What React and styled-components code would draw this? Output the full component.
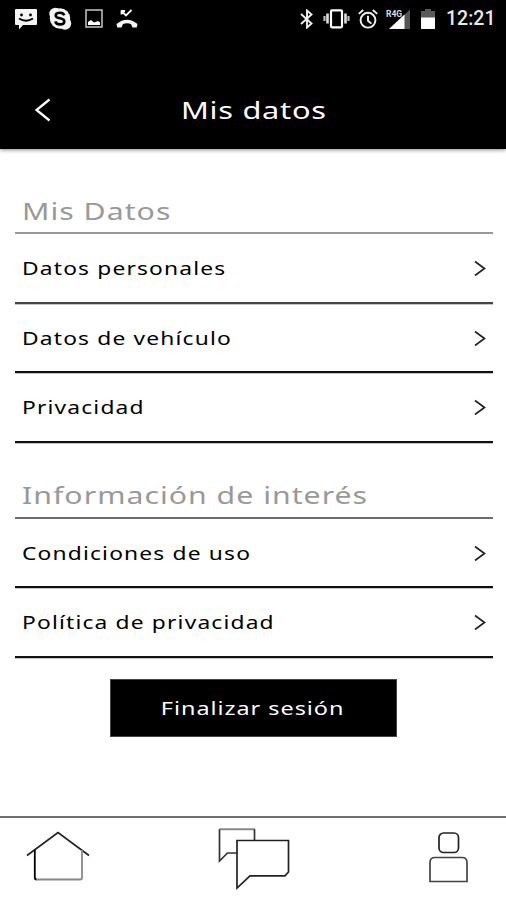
import styled, { createGlobalStyle } from "styled-components";

const GlobalStyle = createGlobalStyle`
  * {
    box-sizing: border-box;
  }
  body {
    margin: 0;
    background-color: #fff;
    font-family: "Noto Sans", "Open Sans", sans-serif;
  }
`;

const personalItems = ["Datos personales", "Datos de vehículo", "Privacidad"];
const infoItems = ["Condiciones de uso", "Política de privacidad"];

function StatusIcons() {
  return (
    <>
      <svg width="22" height="21" viewBox="0 0 22 21">
        <path d="M1 0h20a1 1 0 0 1 1 1v14a1 1 0 0 1-1 1H8l-4 4.500V16H1a1 1 0 0 1-1-1V1a1 1 0 0 1 1-1z" fill="#f4f4f4" />
        <circle cx="6.5" cy="6" r="1.4" />
        <circle cx="15.5" cy="6" r="1.4" />
        <path d="M4 9.500q7 4.500 14 0" fill="none" stroke="#000" strokeWidth="1.800" />
      </svg>
      <svg width="24" height="24" viewBox="0 0 24 24">
        <circle cx="11" cy="11.500" r="10.200" fill="#f4f4f4" />
        <circle cx="6.500" cy="7" r="6.200" fill="#f4f4f4" />
        <circle cx="16" cy="16.500" r="6.200" fill="#f4f4f4" />
        <path
          d="M15.300 8.300C14.500 6.300 13 5.700 11 5.700c-2.600 0-4.300 1-4.300 2.700 0 4 8.600 1.800 8.600 5.800 0 2-1.800 3.200-4.400 3.200-2.400 0-4.100-1-4.600-3"
          fill="none"
          stroke="#000"
          strokeWidth="2.600"
        />
      </svg>
      <svg width="19" height="20" viewBox="0 0 19 20">
        <rect x="1" y="1" width="16" height="17" fill="none" stroke="#bbb" strokeWidth="1.600" />
        <path d="M3 16v-3l3-2 3 2.500 4-1.500 2 1.500V16z" fill="#fff" />
      </svg>
      <svg width="22" height="20" viewBox="0 0 22 20">
        <path d="M5.500 1.500v4M5 2h4M5.500 2l4.500 4.500 5.500-5.500" fill="none" stroke="#fff" strokeWidth="1.800" />
        <path d="M.500 15q10.500-8.500 21 0l-.8 3.500h-4.200l-1.500-3.500q-4-1.500-8 0l-1.500 3.500H1.300z" fill="#f4f4f4" />
      </svg>
    </>
  );
}

function SystemIcons() {
  return (
    <>
      <svg width="15" height="20" viewBox="0 0 15 20">
        <path d="M1 5l10.500 9.500L7 18.500V1.500L11.500 5.500 1 15" fill="none" stroke="#f0f0f0" strokeWidth="1.900" />
      </svg>
      <svg width="27" height="20" viewBox="0 0 27 20">
        <rect x="8" y="1.300" width="11" height="17" rx="1" fill="none" stroke="#fff" strokeWidth="2.200" />
        <path d="M4.500 4.500v10M22.500 4.500v10" stroke="#ddd" strokeWidth="2.600" />
        <path d="M1.500 7v5M25.500 7v5" stroke="#bbb" strokeWidth="2.200" />
      </svg>
      <svg width="20" height="20" viewBox="0 0 20.500 20.500">
        <circle cx="10.250" cy="11.500" r="7.600" fill="none" stroke="#eee" strokeWidth="2" />
        <path d="M10.250 7v5l3.500 3M.800 5l4.500-4M19.700 5L15.200 1" fill="none" stroke="#eee" strokeWidth="2" />
      </svg>
      <svg width="27" height="21" viewBox="0 0 27 21">
        <path d="M3 20L24 .500V20z" fill="#555" />
        <path d="M3 20L18.500 5.500V20z" fill="#fff" />
        <text x="0" y="8" fontFamily="Roboto, sans-serif" fontWeight="700" fontSize="8.500" fill="#ddd">
          R4G
        </text>
      </svg>
      <svg width="17" height="20" viewBox="0 0 17 20">
        <path d="M0 2h4V0h6v2h4v7H0z" fill="#5a5a5a" />
        <path d="M0 8.500h14V20H0z" fill="#fff" />
      </svg>
    </>
  );
}

function Section({ title, items, $gap, $inset, $rule, $firstRule }) {
  return (
    <StyledSection $gap={$gap}>
      <SectionTitle $inset={$inset} $rule={$rule}>
        <WideText $size={24} $stretch={1.26} $track={0.8}>{title}</WideText>
      </SectionTitle>
      {items.map((item, index) => (
        <Row key={item} $rule={index === 0 ? $firstRule : "#111"}>
          <WideText $size={18} $stretch={1.266} $track={0.92}>{item}</WideText>
          <svg width="12" height="16" viewBox="0 0 12 16">
            <path d="M1 1.500l9.500 7L1 15.500" fill="none" stroke="#222" strokeWidth="1.700" />
          </svg>
        </Row>
      ))}
    </StyledSection>
  );
}

function App() {
  return (
    <>
      <GlobalStyle />
      <Screen>
        <StatusBar>
          <LeftIcons>
            <StatusIcons />
          </LeftIcons>
          <RightIcons>
            <SystemIcons />
            <Clock>12:21</Clock>
          </RightIcons>
        </StatusBar>
        <Header>
          <BackButton aria-label="Volver">
            <svg width="16" height="24" viewBox="0 0 16 24">
              <path d="M14.500 1.500L1.500 12l13 10.500" fill="none" stroke="#fff" strokeWidth="2.300" />
            </svg>
          </BackButton>
          <WideText as="h1" $size={24} $stretch={1.28} $track={0.58}>Mis datos</WideText>
        </Header>
        <Content>
          <Section title="Mis Datos" items={personalItems} $gap={41} $inset={6} $rule="#999" $firstRule="#444" />
          <Section title="Información de interés" items={infoItems} $gap={32} $inset={5} $rule="#6c6c6c" $firstRule="#111" />
          <LogoutButton>
            <WideText $size={18} $stretch={1.3} $track={0.75} $center>Finalizar sesión</WideText>
          </LogoutButton>
        </Content>
        <TabBar>
          <svg width="64" height="56" viewBox="0 0 64 56">
            <path d="M1 27.500L32 4.500l31 23" fill="none" stroke="#222" strokeWidth="1.700" />
            <path d="M8.800 22v27.500q0 2 2 2" fill="none" stroke="#000" strokeWidth="1.800" />
            <path d="M10.500 51.500h43.500q2 0 2-2V22" fill="none" stroke="#888" strokeWidth="1.800" />
          </svg>
          <ChatIcon width="72" height="62" viewBox="0 0 72 62">
            <path d="M1.500 1.200h35.500" fill="none" stroke="#888" strokeWidth="2" />
            <path d="M36.500 13V1.200M1.500 1.200V33l8-8H19" fill="none" stroke="#333" strokeWidth="1.700" />
            <path d="M19 12.500h51.500v31.500L67 47.800H32L19 60z" fill="none" stroke="#222" strokeWidth="1.700" />
          </ChatIcon>
          <svg width="40" height="56" viewBox="0 0 40 56">
            <rect x="11" y="5" width="19.500" height="19.500" rx="4.500" fill="none" stroke="#222" strokeWidth="1.700" />
            <path d="M2 53.500V34.500q0-5 5-5h27q5 0 5 5v19z" fill="none" stroke="#444" strokeWidth="1.700" />
          </svg>
        </TabBar>
      </Screen>
    </>
  );
}

export default App;

const Screen = styled.div`
  display: flex;
  flex-direction: column;
  width: 506px;
  height: 900px;
  overflow: hidden;
  background-color: #fff;
`;

// extended lettering, the stretch grows from the left edge unless centred
const WideText = styled.span`
  display: block;
  margin: 0;
  font-size: ${(props) => props.$size}px;
  font-weight: 400;
  line-height: 30px;
  letter-spacing: ${(props) => props.$track}px;
  white-space: nowrap;
  transform: scaleX(${(props) => props.$stretch});
  transform-origin: ${(props) => (props.$center ? "center" : "left")};
`;

const StatusBar = styled.div`
  display: flex;
  justify-content: space-between;
  height: 40px;
  padding: 8px 11px 0 15px;
  background-color: #000;
`;

const LeftIcons = styled.div`
  display: flex;
  align-items: center;
  gap: 12px;
  height: 22px;
`;

const RightIcons = styled.div`
  display: flex;
  align-items: center;
  gap: 8px;
  height: 22px;
`;

const Clock = styled.span`
  width: 49px;
  font-family: Roboto, sans-serif;
  font-size: 19.5px;
  font-weight: 500;
  line-height: 22px;
  color: #e8e8e8;
`;

const Header = styled.header`
  display: flex;
  align-items: center;
  flex-shrink: 0;
  height: 109px;
  padding: 31px 0 0 35px;
  background-color: #000;
  color: #fff;
  box-shadow: 0 1px 4px rgba(0, 0, 0, 0.45);
`;

const BackButton = styled.button`
  display: flex;
  width: 146px;
  padding: 0;
  border: 0;
  background: none;
`;

const Content = styled.main`
  display: flex;
  flex-direction: column;
  flex: 1;
  padding: 0 13px 0 15px;
`;

const StyledSection = styled.section`
  padding-top: ${(props) => props.$gap}px;
`;

const SectionTitle = styled.div`
  height: 44px;
  padding: ${(props) => props.$inset}px 0 0 7px;
  border-bottom: 2px solid ${(props) => props.$rule};
  color: #999;
`;

const Row = styled.div`
  display: flex;
  align-items: center;
  justify-content: space-between;
  height: 69.5px;
  padding: 1px 7px 0 7px;
  border-bottom: 2px solid ${(props) => props.$rule};
  box-shadow: 0 1px 0 #c4c4c4;
  color: #000;
`;

const LogoutButton = styled.button`
  display: flex;
  align-items: center;
  justify-content: center;
  align-self: center;
  width: 287px;
  height: 58px;
  margin: 21px 2px 0 0;
  border: 1px solid #444;
  background-color: #000;
  color: #fff;
  font-family: inherit;
`;

const TabBar = styled.nav`
  display: flex;
  justify-content: space-between;
  height: 84px;
  padding: 10px 38px 0 26px;
  border-top: 2px solid #707070;
`;

// the bubbles hang a little left of the middle
const ChatIcon = styled.svg`
  margin-right: 10px;
`;
